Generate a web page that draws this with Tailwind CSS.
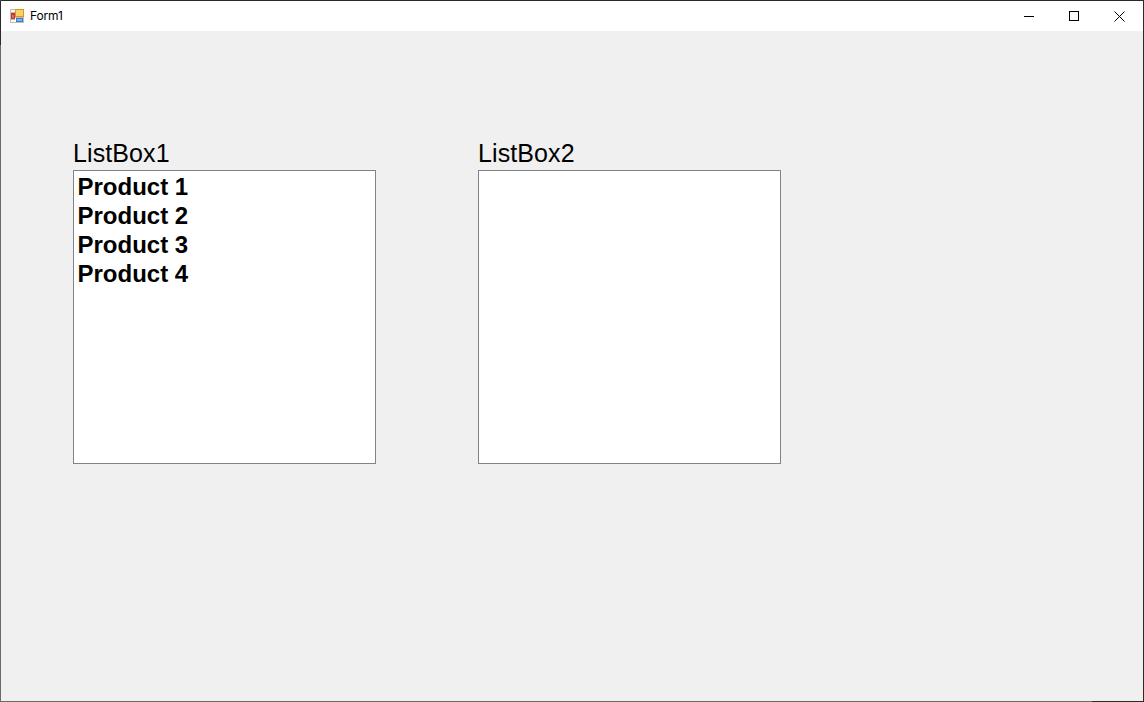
<!DOCTYPE html>
<html lang="en">
<head>
    <meta charset="utf-8" />
    <title>Form1</title>
    <script src="https://cdn.jsdelivr.net/npm/@tailwindcss/browser@4"></script>
</head>
<body class="m-0 overflow-hidden">
    <div class="relative flex flex-col w-[1144px] h-[702px] border border-[#2a2a2a] border-l-[#6a6a6a] border-b-[#6a6a6a] bg-[#f0f0f0] font-['Liberation_Sans',Arial,sans-serif] text-black">
        <!-- darker bits of the window edge -->
        <div class="absolute -left-px top-0 w-px h-[44px] bg-[#2a2a2a]"></div>
        <div class="absolute -bottom-px -right-px w-[52px] h-px bg-[#2a2a2a]"></div>
        <!-- title bar -->
        <div class="flex items-center h-[30px] bg-white shrink-0">
            <svg class="ml-[9px] w-[14px] h-[14px]" viewBox="0 0 14 14" shape-rendering="crispEdges">
                <rect x="0" y="0" width="14" height="14" fill="#bdbdbd" />
                <rect x="1" y="1" width="4" height="2" fill="#fbfbfb" />
                <rect x="1" y="11" width="4" height="2" fill="#fbfbfb" />
                <rect x="5" y="9" width="1" height="4" fill="#fbfbfb" />
                <rect x="1" y="4" width="4" height="6" fill="#c23a30" />
                <rect x="2" y="6" width="2" height="3" fill="#e2685c" />
                <rect x="5" y="0" width="9" height="8" fill="#d9961a" />
                <rect x="6" y="1" width="7" height="6" fill="#f8d268" />
                <rect x="6" y="9" width="7" height="4" fill="#3f78cf" />
                <rect x="7" y="10" width="5" height="2" fill="#86b0ea" />
            </svg>
            <span class="ml-[6px] text-[12px] font-['Inter',sans-serif] tracking-[-0.15px]">Form1</span>
            <div class="ml-auto flex items-center">
                <div class="w-[46px] h-[30px] flex items-center justify-center">
                    <div class="w-[10px] h-px bg-black"></div>
                </div>
                <div class="w-[44px] h-[30px] flex items-center justify-center">
                    <div class="w-[10px] h-[10px] border border-black"></div>
                </div>
                <div class="w-[46px] h-[30px] flex items-center justify-center">
                    <svg class="w-[11px] h-[11px]" viewBox="0 0 11 11" fill="none" stroke="#000" stroke-width="1">
                        <path d="M0.5 0.5L10.5 10.5M10.5 0.5L0.5 10.5" />
                    </svg>
                </div>
                <div class="w-px"></div>
            </div>
        </div>
        <!-- client area -->
        <div class="flex gap-[102px] pl-[72px] pt-[109px]">
            <div class="w-[303px]">
                <div class="h-[30px] text-[25px] leading-[26px] tracking-[0.1px]">ListBox1</div>
                <ul class="h-[294px] border border-[#82828c] bg-white pl-[3.5px] pt-[1px] text-[24px] font-bold leading-[29px]">
                    <li>Product 1</li>
                    <li>Product 2</li>
                    <li>Product 3</li>
                    <li>Product 4</li>
                </ul>
            </div>
            <div class="w-[303px]">
                <div class="h-[30px] text-[25px] leading-[26px] tracking-[0.1px]">ListBox2</div>
                <ul class="h-[294px] border border-[#82828c] bg-white"></ul>
            </div>
        </div>
    </div>
</body>
</html>
